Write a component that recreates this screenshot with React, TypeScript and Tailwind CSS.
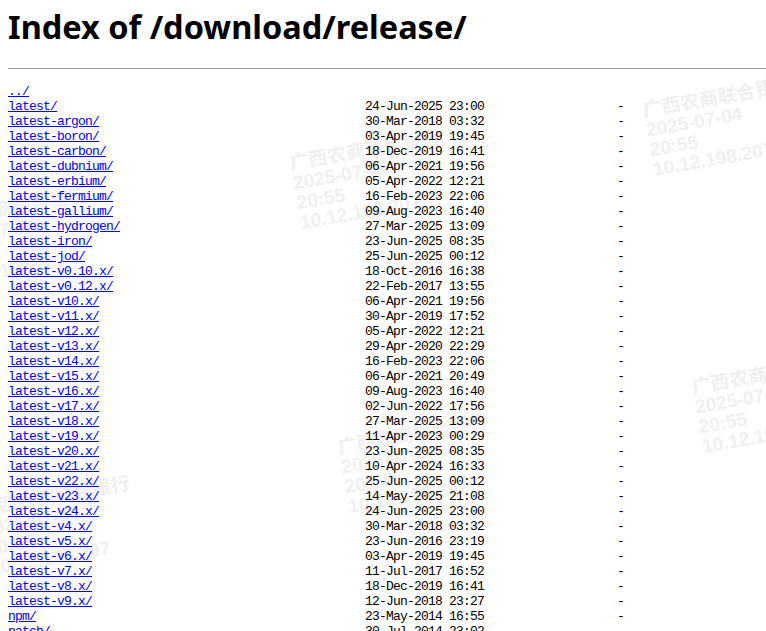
import React from "react";

const rows: [string, string][] = [
  ["latest/", "24-Jun-2025 23:00"],
  ["latest-argon/", "30-Mar-2018 03:32"],
  ["latest-boron/", "03-Apr-2019 19:45"],
  ["latest-carbon/", "18-Dec-2019 16:41"],
  ["latest-dubnium/", "06-Apr-2021 19:56"],
  ["latest-erbium/", "05-Apr-2022 12:21"],
  ["latest-fermium/", "16-Feb-2023 22:06"],
  ["latest-gallium/", "09-Aug-2023 16:40"],
  ["latest-hydrogen/", "27-Mar-2025 13:09"],
  ["latest-iron/", "23-Jun-2025 08:35"],
  ["latest-jod/", "25-Jun-2025 00:12"],
  ["latest-v0.10.x/", "18-Oct-2016 16:38"],
  ["latest-v0.12.x/", "22-Feb-2017 13:55"],
  ["latest-v10.x/", "06-Apr-2021 19:56"],
  ["latest-v11.x/", "30-Apr-2019 17:52"],
  ["latest-v12.x/", "05-Apr-2022 12:21"],
  ["latest-v13.x/", "29-Apr-2020 22:29"],
  ["latest-v14.x/", "16-Feb-2023 22:06"],
  ["latest-v15.x/", "06-Apr-2021 20:49"],
  ["latest-v16.x/", "09-Aug-2023 16:40"],
  ["latest-v17.x/", "02-Jun-2022 17:56"],
  ["latest-v18.x/", "27-Mar-2025 13:09"],
  ["latest-v19.x/", "11-Apr-2023 00:29"],
  ["latest-v20.x/", "23-Jun-2025 08:35"],
  ["latest-v21.x/", "10-Apr-2024 16:33"],
  ["latest-v22.x/", "25-Jun-2025 00:12"],
  ["latest-v23.x/", "14-May-2025 21:08"],
  ["latest-v24.x/", "24-Jun-2025 23:00"],
  ["latest-v4.x/", "30-Mar-2018 03:32"],
  ["latest-v5.x/", "23-Jun-2016 23:19"],
  ["latest-v6.x/", "03-Apr-2019 19:45"],
  ["latest-v7.x/", "11-Jul-2017 16:52"],
  ["latest-v8.x/", "18-Dec-2019 16:41"],
  ["latest-v9.x/", "12-Jun-2018 23:27"],
  ["npm/", "23-May-2014 16:55"],
  ["patch/", "30-Jul-2014 23:02"],
];

// watermark tiles (left edge / middle of first line)
const tiles = [
  { x: -111, y: -63 },
  { x: 242, y: -116 },
  { x: -63, y: 222 },
  { x: 290, y: 164 },
  { x: 643, y: 111 },
  { x: -20, y: 510 },
  { x: 338, y: 448 },
  { x: 692, y: 388 },
];

function Watermark() {
  return (
    <div className="pointer-events-none absolute inset-0 overflow-hidden">
      {tiles.map((t, k) => (
        <div
          key={k}
          className="absolute origin-[0_10px] -rotate-10 whitespace-nowrap text-[19px] leading-[20px] font-bold text-[#f0f0f0] [font-family:'Liberation_Sans','Noto_Sans_CJK_SC',sans-serif]"
          style={{ left: t.x, top: t.y - 10 }}
        >
          <div>广西农商联合银行</div>
          <div>2025-07-04</div>
          <div>20:55</div>
          <div>10.12.198.207</div>
        </div>
      ))}
    </div>
  );
}

export default function App() {
  return (
    <div className="relative min-h-screen overflow-hidden bg-white text-black">
      <Watermark />
      <div className="relative pl-2">
        <h1 className="mt-[5px] text-[32.5px] leading-[44px] font-bold [font-family:'Noto_Sans',sans-serif]">
          Index of /download/release/
        </h1>
        <hr className="mt-[19px] border-0 border-t border-[#9a9a9a]" />
        <pre className="mt-[15px] text-[13px] leading-[15px] tracking-[-0.8px] [font-family:'Liberation_Mono',monospace]">
          <a href="#" className="text-[#0000ee] underline">../</a>
          {"\n"}
          {rows.map(([name, date]) => (
            <React.Fragment key={name}>
              <a href="#" className="text-[#0000ee] underline">{name}</a>
              {" ".repeat(51 - name.length) + date + " ".repeat(19) + "-\n"}
            </React.Fragment>
          ))}
        </pre>
      </div>
    </div>
  );
}
